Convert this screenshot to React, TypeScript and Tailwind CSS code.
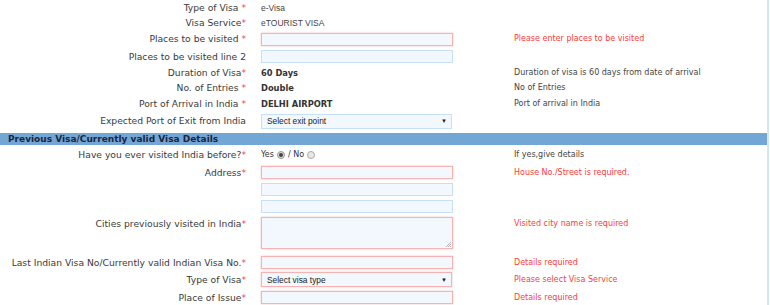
import React from "react";

const labelFont = { fontFamily: '"DejaVu Sans", Verdana, sans-serif' };
const arial = { fontFamily: '"Liberation Sans", Arial, sans-serif' };

function Star({ space }: { space?: boolean }) {
  return <span className="text-[#ff3b3b]">{space ? " *" : "*"}</span>;
}

function Label({ text, space, star = true, top }: { text: string; space?: boolean; star?: boolean; top?: boolean }) {
  return (
    <div className={`w-[246px] shrink-0 text-right text-[9.2px] leading-[12px] text-[#3a3a3a] ${top ? "self-start pt-[1px]" : ""}`} style={labelFont}>
      {text}
      {star && <Star space={space} />}
    </div>
  );
}

function Input({ error }: { error?: boolean }) {
  return (
    <div
      className={`h-[13px] w-[192px] bg-[#f2f8fe] border ${
        error ? "border-[#f5b3b3] shadow-[0_0_2px_#f9c0c0]" : "border-[#c6e0f8]"
      }`}
    />
  );
}

function Select({ text, error }: { text: string; error?: boolean }) {
  return (
    <div
      className={`flex h-[15px] w-[191px] items-center justify-between bg-[#f2f8fe] border pl-[5px] pr-[4px] text-[8.4px] leading-[12px] text-[#222] ${
        error ? "border-[#f5b3b3] shadow-[0_0_2px_#f9c0c0]" : "border-[#c6e0f8]"
      }`}
      style={arial}
    >
      <span>{text}</span>
      <span className="text-[6px]">▼</span>
    </div>
  );
}

function Msg({ text, red, top }: { text?: string; red?: boolean; top?: boolean }) {
  return (
    <div className={`text-[8px] leading-[12px] ${red ? "text-[#ff3b3b]" : "text-[#444]"} ${top ? "self-start pt-[1px]" : ""}`} style={labelFont}>
      {text}
    </div>
  );
}

function Row({ h, children }: { h: string; children: React.ReactNode }) {
  return <div className={`flex items-center ${h}`}>{children}</div>;
}

function Field({ children, top }: { children?: React.ReactNode; top?: boolean }) {
  return <div className={`ml-[15px] flex w-[253px] shrink-0 items-center ${top ? "self-start" : ""}`}>{children}</div>;
}

export default function App() {
  return (
    <div className="relative h-[305px] w-[770px] overflow-hidden bg-white">
      <div className="absolute right-[1px] top-0 h-full w-[2px] bg-[#d3e7fa]" />
      <div className="flex flex-col">
        <Row h="h-[15px]">
          <Label text="Type of Visa" space />
          <Field><span className="text-[8.5px] leading-[12px] text-[#444]" style={arial}>e-Visa</span></Field>
        </Row>
        <Row h="h-[15px]">
          <Label text="Visa Service" />
          <Field><span className="text-[8.5px] leading-[12px] text-[#444]" style={arial}>eTOURIST VISA</span></Field>
        </Row>
        <Row h="h-[18px]">
          <Label text="Places to be visited" space />
          <Field><Input error /></Field>
          <Msg text="Please enter places to be visited" red />
        </Row>
        <Row h="h-[17px]">
          <Label text="Places to be visited line 2" star={false} />
          <Field><Input /></Field>
        </Row>
        <Row h="h-[15px]">
          <Label text="Duration of Visa" />
          <Field><span className="text-[8.3px] leading-[12px] font-bold text-[#333]" style={labelFont}>60 Days</span></Field>
          <Msg text="Duration of visa is 60 days from date of arrival" />
        </Row>
        <Row h="h-[16px]">
          <Label text="No. of Entries" space />
          <Field><span className="text-[8.3px] leading-[12px] font-bold text-[#333]" style={labelFont}>Double</span></Field>
          <Msg text="No of Entries" />
        </Row>
        <Row h="h-[15px]">
          <Label text="Port of Arrival in India" space />
          <Field><span className="text-[8.3px] leading-[12px] font-bold text-[#333]" style={labelFont}>DELHI AIRPORT</span></Field>
          <Msg text="Port of arrival in India" />
        </Row>
        <Row h="h-[20px]">
          <Label text="Expected Port of Exit from India" star={false} />
          <Field><Select text="Select exit point" /></Field>
        </Row>
        <div className="h-[2px]" />
        <div className="flex h-[12px] w-[767px] items-center bg-[#72a6d5] pl-[8px]">
          <span className="text-[9px] leading-[12px] font-bold text-[#1a2540]" style={labelFont}>
            Previous Visa/Currently valid Visa Details
          </span>
        </div>
        <Row h="h-[20px]">
          <Label text="Have you ever visited India before?" />
          <Field>
            <div className="flex items-center gap-[3px] text-[8px] leading-[12px] text-[#333]" style={labelFont}>
              <span>Yes</span>
              <span className="flex h-[8px] w-[8px] items-center justify-center rounded-full border border-[#999] bg-[#ddd]">
                <span className="h-[4px] w-[4px] rounded-full bg-[#444]" />
              </span>
              <span>/ No</span>
              <span className="h-[8px] w-[8px] rounded-full border border-[#aaa] bg-[#e8e8e8]" />
            </div>
          </Field>
          <Msg text="If yes,give details" />
        </Row>
        <div className="flex pt-[1px]">
          <Label text="Address" top />
          <Field top>
            <div className="flex flex-col gap-[4px]">
              <Input error />
              <Input />
              <Input />
            </div>
          </Field>
          <Msg text="House No./Street is required." red top />
        </div>
        <div className="flex pt-[4px]">
          <Label text="Cities previously visited in India" top />
          <Field top>
            <div className="relative h-[32px] w-[192px] border border-[#f5b3b3] bg-[#f2f8fe] shadow-[0_0_2px_#f9c0c0]">
              <svg className="absolute bottom-[1px] right-[1px]" width="5" height="5" viewBox="0 0 5 5">
                <path d="M0 5 L5 0 M2 5 L5 2 M4 5 L5 4" stroke="#999" strokeWidth="0.7" />
              </svg>
            </div>
          </Field>
          <Msg text="Visited city name is required" red top />
        </div>
        <div className="h-[6px]" />
        <Row h="h-[15px]">
          <Label text="Last Indian Visa No/Currently valid Indian Visa No." />
          <Field><Input error /></Field>
          <Msg text="Details required" red />
        </Row>
        <Row h="h-[19px]">
          <Label text="Type of Visa" />
          <Field><Select text="Select visa type" error /></Field>
          <Msg text="Please select Visa Service" red />
        </Row>
        <div className="flex pt-[2px]">
          <Label text="Place of Issue" top />
          <Field top><Input error /></Field>
          <Msg text="Details required" red top />
        </div>
      </div>
    </div>
  );
}
